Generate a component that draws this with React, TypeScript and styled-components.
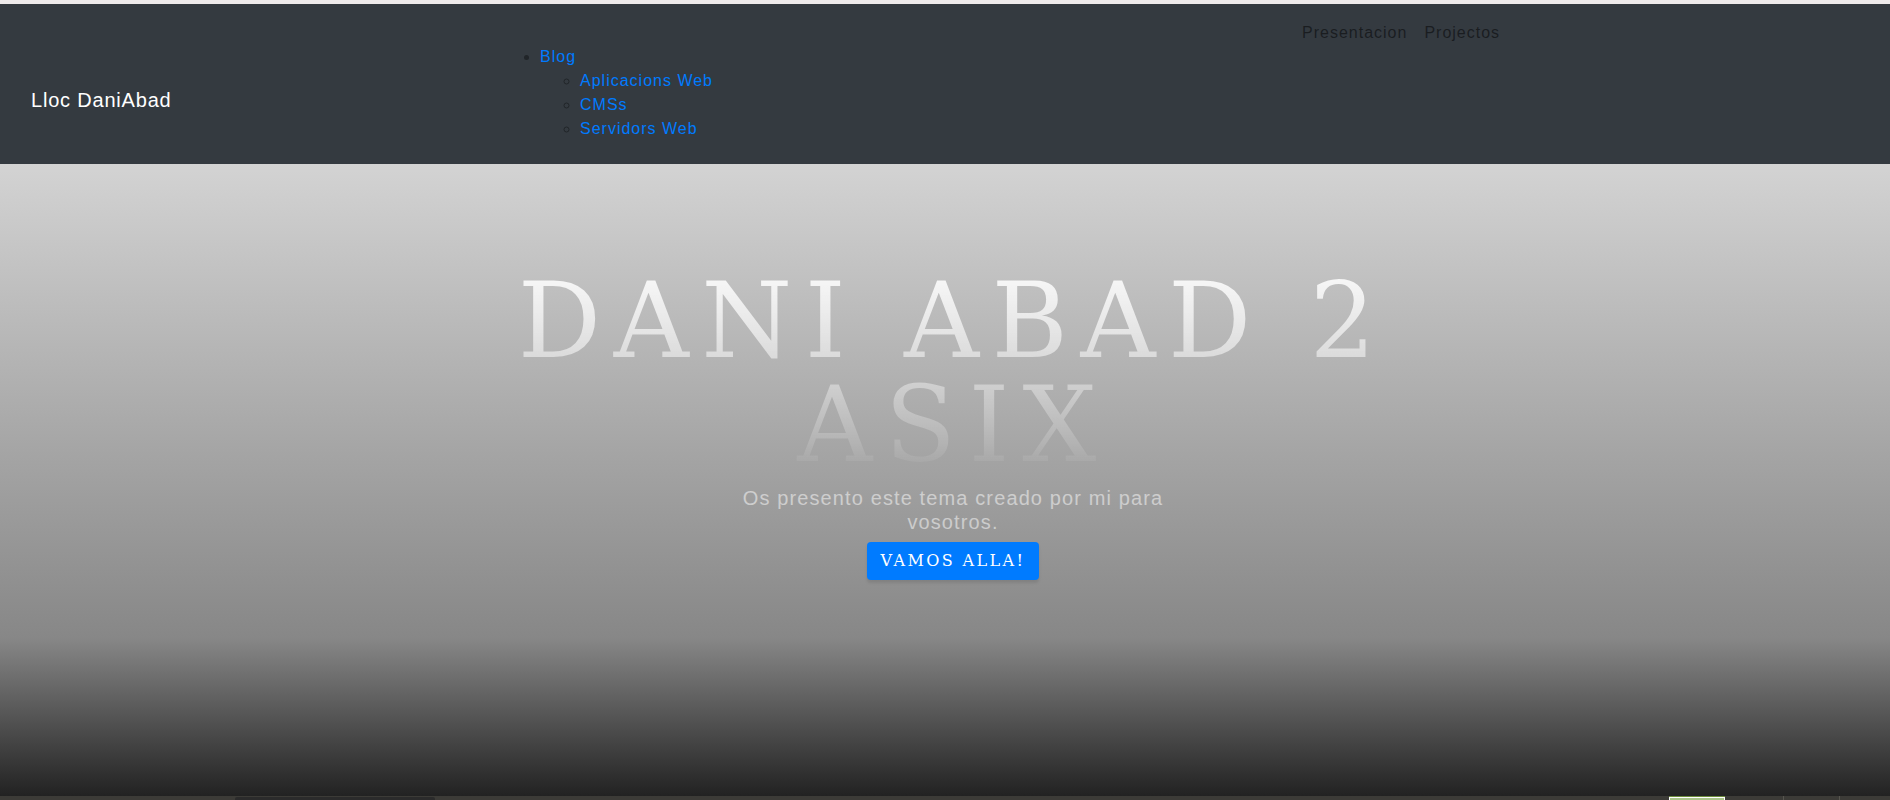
import React from "react";
import styled, { createGlobalStyle } from "styled-components";

const Global = createGlobalStyle`
  html, body { margin: 0; padding: 0; background: #f1eded; }
  body { font-family: "Liberation Sans", Arial, sans-serif; }
  * { box-sizing: border-box; }
`;

const Page = styled.div`
  width: 1890px;
  height: 800px;
  display: flex;
  flex-direction: column;
  overflow: hidden;
`;

const TopStrip = styled.div`
  height: 4px;
  background: #efebeb;
  flex: none;
`;

const Header = styled.header`
  height: 160px;
  flex: none;
  background: #343a40;
  display: grid;
  grid-template-columns: 469px 802px 1fr;
  align-items: start;
  padding-left: 31px;
  letter-spacing: 0.0625em;
`;

const Brand = styled.a`
  margin-top: 81px;
  font-size: 20px;
  line-height: 30px;
  color: #fff;
  text-decoration: none;
  letter-spacing: 0.8px;
`;

const Menu = styled.ul<{ $sub?: boolean }>`
  margin: ${(p) => (p.$sub ? "0" : "41px 0 0")};
  padding-left: 40px;
  list-style: ${(p) => (p.$sub ? "circle" : "disc")};
  color: #212529;
  font-size: 16px;
  line-height: 24px;
`;

const MenuLink = styled.a`
  color: #007bff;
  text-decoration: none;
`;

const RightNav = styled.ul`
  margin: 17px 0 0;
  padding: 0;
  list-style: none;
  display: flex;
  gap: 17px;
  font-size: 16px;
  line-height: 24px;
`;

const RightLink = styled.a`
  color: rgba(0, 0, 0, 0.5);
  text-decoration: none;
`;

const Hero = styled.section`
  flex: 1;
  background: linear-gradient(
    to bottom,
    #d3d3d3 0%,
    #878787 75%,
    #222222 100%
  );
  display: flex;
  flex-direction: column;
  align-items: center;
  padding-top: 105px;
`;

const Container = styled.div`
  width: 1140px;
  margin-left: 16px;
  display: flex;
  flex-direction: column;
  align-items: center;
  text-align: center;
`;

const Title = styled.h1`
  margin: 0;
  font-family: "DejaVu Serif", serif;
  font-weight: 400;
  font-size: 104px;
  line-height: 104px;
  letter-spacing: 12.5px;
  text-transform: uppercase;
  background: linear-gradient(rgba(255, 255, 255, 0.9), rgba(255, 255, 255, 0));
  -webkit-background-clip: text;
  background-clip: text;
  -webkit-text-fill-color: transparent;
  color: transparent;
`;

const Subtitle = styled.h2`
  margin: 9px 0 8px;
  max-width: 480px;
  font-family: "Liberation Sans", Arial, sans-serif;
  font-weight: 400;
  font-size: 20px;
  line-height: 24px;
  letter-spacing: 1.12px;
  color: rgba(255, 255, 255, 0.5);
`;

const Button = styled.a`
  display: inline-block;
  background: #007bff;
  color: #fff;
  font-family: "DejaVu Serif", serif;
  font-size: 16px;
  line-height: 24px;
  padding: 7px 14px;
  border-radius: 4px;
  text-transform: uppercase;
  letter-spacing: 2.4px;
  text-decoration: none;
  box-shadow: 0 3px 3px 0 rgba(0, 0, 0, 0.1);
`;

const Taskbar = styled.div`
  height: 4px;
  flex: none;
  background: #3c3b37;
  display: flex;
  align-items: flex-end;
`;

const TaskItem = styled.div<{ $w: number; $ml: number }>`
  width: ${(p) => p.$w}px;
  margin-left: ${(p) => p.$ml}px;
  height: 3px;
  background: #2b2b2b;
  border-radius: 2px 2px 0 0;
`;

const ActiveItem = styled.div<{ $w: number; $ml: number }>`
  width: ${(p) => p.$w}px;
  margin-left: ${(p) => p.$ml}px;
  height: 4px;
  background: #a9c387;
  border-top: 1px solid #6b8a3a;
  box-shadow: inset 0 1px 0 #fff, inset 1px 0 0 #fff, inset -1px 0 0 #fff;
`;

const Tick = styled.div<{ $ml: number }>`
  width: 1px;
  height: 4px;
  margin-left: ${(p) => p.$ml}px;
  background: #57564f;
`;

export default function App() {
  return (
    <Page>
      <Global />
      <TopStrip />
      <Header>
        <Brand href="#">Lloc DaniAbad</Brand>
        <Menu>
          <li>
            <MenuLink href="#">Blog</MenuLink>
            <Menu $sub>
              <li>
                <MenuLink href="#">Aplicacions Web</MenuLink>
              </li>
              <li>
                <MenuLink href="#">CMSs</MenuLink>
              </li>
              <li>
                <MenuLink href="#">Servidors Web</MenuLink>
              </li>
            </Menu>
          </li>
        </Menu>
        <RightNav>
          <li>
            <RightLink href="#">Presentacion</RightLink>
          </li>
          <li>
            <RightLink href="#">Projectos</RightLink>
          </li>
        </RightNav>
      </Header>
      <Hero>
        <Container>
          <Title>Dani Abad 2 ASIX</Title>
          <Subtitle>Os presento este tema creado por mi para vosotros.</Subtitle>
          <Button href="#">Vamos alla!</Button>
        </Container>
      </Hero>
      <Taskbar>
        <TaskItem $w={200} $ml={235} />
        <ActiveItem $w={56} $ml={1234} />
        <Tick $ml={58} />
        <Tick $ml={55} />
      </Taskbar>
    </Page>
  );
}
